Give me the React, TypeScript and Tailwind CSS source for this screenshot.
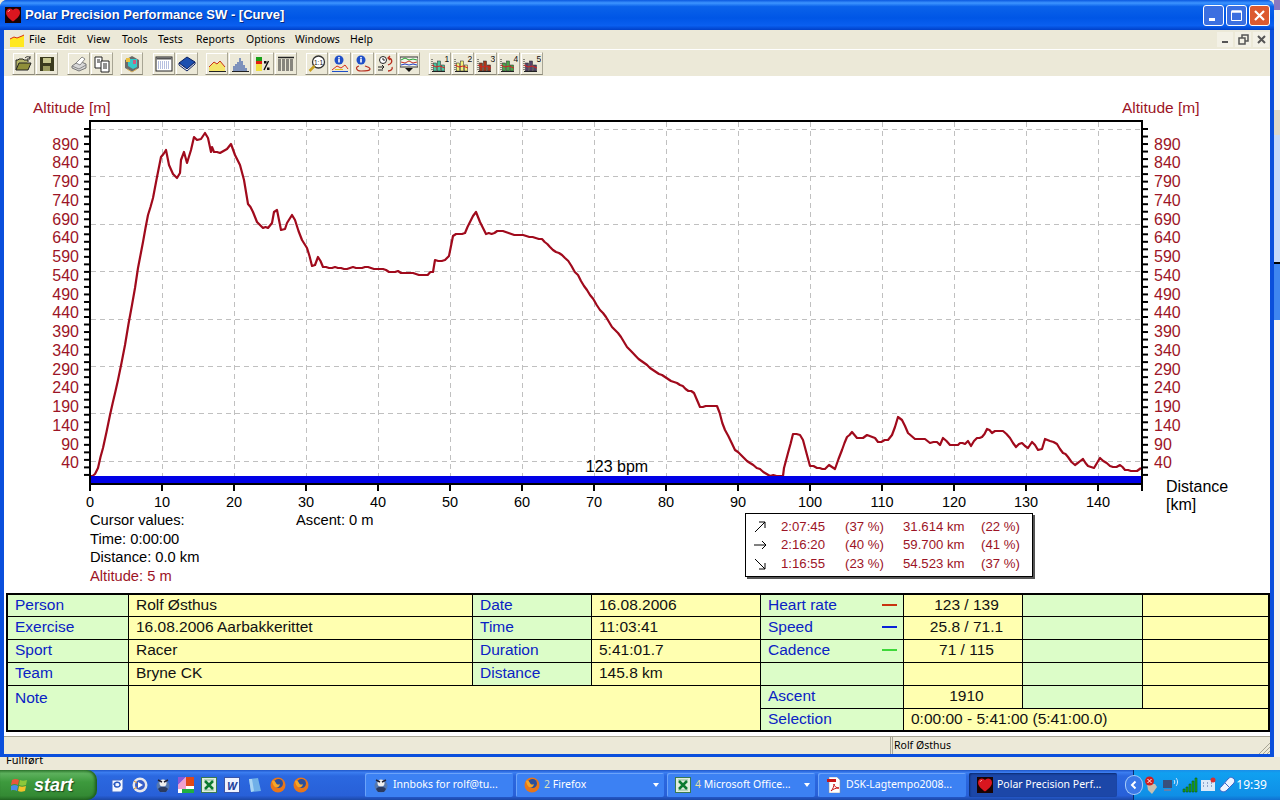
import type { ReactNode } from "react";

const CURVE_POINTS =
  "90,476 95,474 98,468 103,448 110,415 118,380 125,345 132,305 135,288 138,268 143,242 148,215 153,198 157,177 161,157 166,150 169,165 173,174 177,178 180,173 181,160 184,152 187,163 191,150 194,137 197,140 201,139 205,133 208,138 211,152 212,147 214,152 220,153 227,149 231,144 235,155 240,165 244,180 248,204 253,212 257,222 263,228 268,228 272,223 274,212 277,210 281,230 285,229 287,223 292,215 295,220 302,240 307,248 312,266 315,265 318,257 323,267 338,268 350,268 365,267 380,269 395,272 410,273 425,275 433,272 435,260 445,260 449,256 453,236 465,233 470,222 476,212 480,222 486,234 500,231 520,235 542,239 550,247 565,258 578,275 590,295 600,310 615,330 630,350 650,368 665,377 680,385 694,393 700,407 717,406 725,430 735,450 750,463 760,469 770,476 783,476 784,468 788,453 793,434 800,435 803,440 807,455 810,466 817,468 825,469 829,465 835,469 842,450 847,437 852,432 857,438 863,438 867,435 875,438 878,442 888,440 892,435 898,417 902,420 908,433 915,439 925,439 930,443 937,442 940,445 943,438 950,445 958,445 960,443 965,444 968,441 971,446 977,438 982,437 987,429 992,433 995,431 1003,431 1010,438 1016,447 1022,443 1028,448 1032,442 1038,450 1042,449 1045,439 1050,441 1057,444 1063,453 1068,457 1075,465 1083,459 1088,466 1094,468 1100,458 1110,466 1113,467 1120,465 1125,470 1137,471 1141,468";

function roughen(points: string) {
  const pts = points.split(" ").map((p) => p.split(",").map(Number));
  const out: string[] = [];
  pts.forEach(([x, y], i) => {
    const next = pts[i + 1];
    if (!next) {
      out.push(`${x},${y}`);
      return;
    }
    const steps = Math.max(1, Math.round((next[0] - x) / 3));
    for (let s = 0; s < steps; s++) {
      const px = x + ((next[0] - x) * s) / steps;
      const py = y + ((next[1] - y) * s) / steps;
      const noise = s === 0 ? 0 : Math.sin(px * 12.9898) * 0.9;
      out.push(`${px.toFixed(1)},${Math.min(476, Math.round(py + noise))}`);
    }
  });
  return out.join(" ");
}

const CURVE = roughen(CURVE_POINTS);

const ALT_LABELS = [890, 840, 790, 740, 690, 640, 590, 540, 490, 440, 390, 340, 290, 240, 190, 140, 90, 40];
const H_GRID = [129.5, 176.5, 224.5, 271.5, 319.5, 366.5, 413.5, 461.5];
const KM_LABELS = [0, 10, 20, 30, 40, 50, 60, 70, 80, 90, 100, 110, 120, 130, 140];
const TICKS = Array.from({ length: 47 }, (_, i) => 129 + i * 7.52);

function AltitudeChart() {
  const red = "#9c1426";
  return (
    <svg width="1266" height="435" viewBox="4 76 1266 435" className="block shrink-0 overflow-visible">
      <text x="33" y="113" fontSize="15.500" fill={red}>Altitude [m]</text>
      <text x="1122" y="113" fontSize="15.500" fill={red}>Altitude [m]</text>
      {H_GRID.map((y) => (
        <line key={y} x1="91" x2="1141" y1={y} y2={y} stroke="#c0c0c0" strokeDasharray="5 4" />
      ))}
      {KM_LABELS.slice(1).map((k) => (
        <line key={k} x1={Math.round(90 + k * 7.2) + 0.5} x2={Math.round(90 + k * 7.2) + 0.5} y1="122" y2="476" stroke="#c0c0c0" strokeDasharray="5 4" />
      ))}
      {TICKS.map((y) => (
        <g key={y} stroke="#000" strokeWidth="2">
          <line x1="84" x2="90" y1={y} y2={y} />
          <line x1="1142" x2="1148" y1={y} y2={y} />
        </g>
      ))}
      {ALT_LABELS.map((a, i) => (
        <g key={a} fontSize="16" fill={red}>
          <text x="79" y={149.500 + i * 18.76} textAnchor="end">{a}</text>
          <text x="1154" y={149.500 + i * 18.76}>{a}</text>
        </g>
      ))}
      <polyline points={CURVE} fill="none" stroke="#a00a1c" strokeWidth="2.200" strokeLinejoin="round" />
      <rect x="90" y="476" width="1052" height="7" fill="#0000e6" />
      <rect x="89" y="120" width="1054" height="2" fill="#000" />
      <rect x="89" y="483" width="1054" height="2" fill="#000" />
      <rect x="89" y="120" width="2" height="371" fill="#000" />
      <rect x="1141" y="120" width="2" height="371" fill="#000" />
      {KM_LABELS.slice(1).map((k) => (
        <rect key={k} x={89 + k * 7.2} y="484" width="2" height="7" fill="#000" />
      ))}
      {KM_LABELS.map((k) => (
        <text key={k} x={90 + k * 7.2} y="507" fontSize="14.500" fill="#000" textAnchor="middle">{k}</text>
      ))}
      <text x="617" y="472" fontSize="16" fill="#000" textAnchor="middle">123 bpm</text>
      <text x="1166" y="492" fontSize="16" fill="#000">Distance</text>
      <text x="1166" y="510" fontSize="16" fill="#000">[km]</text>
    </svg>
  );
}

function Arrow({ d }: { d: string }) {
  return (
    <svg width="14" height="14" viewBox="0 0 14 14" fill="none" stroke="#000" strokeWidth="1">
      <path d={d} />
    </svg>
  );
}

const STATS = [
  { arrow: "M2 12 12 2M6 2h6v6", time: "2:07:45", p1: "(37 %)", dist: "31.614 km", p2: "(22 %)" },
  { arrow: "M1 7h12M9 3l4 4-4 4", time: "2:16:20", p1: "(40 %)", dist: "59.700 km", p2: "(41 %)" },
  { arrow: "M2 2l10 10M12 6v6H6", time: "1:16:55", p1: "(23 %)", dist: "54.523 km", p2: "(37 %)" },
];

function StatsBox() {
  return (
    <div className="mt-[2px] flex h-[64px] w-[288px] flex-col justify-center border border-black bg-white pl-[7px] text-[13.200px] text-[#9c1426] shadow-[2px_2px_0_#555]">
      {STATS.map((s) => (
        <div key={s.time} className="flex h-[18.500px] items-center">
          <div className="w-[28px]"><Arrow d={s.arrow} /></div>
          <div className="w-[64px]">{s.time}</div>
          <div className="w-[58px]">{s.p1}</div>
          <div className="w-[78px]">{s.dist}</div>
          <div>{s.p2}</div>
        </div>
      ))}
    </div>
  );
}

const GREEN = "bg-[#dcfdc8] text-[#0a22c4]";
const YELLOW = "bg-[#ffffb0] text-[#111]";

function Cell({ tone, className = "", children }: { tone: "g" | "y"; className?: string; children?: ReactNode }) {
  return (
    <div className={`flex items-center border-r border-b border-black pb-[2px] pl-[7px] ${tone === "g" ? GREEN : YELLOW} ${className}`}>
      {children}
    </div>
  );
}

function Sensor({ name, color }: { name: string; color: string }) {
  return (
    <Cell tone="g" className="justify-between pr-[6px]">
      <span>{name}</span>
      <span className={`h-[2px] w-[15px] ${color}`} />
    </Cell>
  );
}

function SummaryTable() {
  const c = "justify-center pl-0";
  return (
    <div className="mx-[2px] grid w-[1264px] shrink-0 grid-cols-[121px_344px_119px_169px_143px_119px_120px_1fr] grid-rows-[22px_23px_23px_23px_23px_22px] border-t-2 border-r border-b border-l-2 border-black text-[15.500px]">
      <Cell tone="g">Person</Cell><Cell tone="y">Rolf Østhus</Cell><Cell tone="g">Date</Cell><Cell tone="y">16.08.2006</Cell>
      <Sensor name="Heart rate" color="bg-[#c8340f]" /><Cell tone="y" className={c}>123 / 139</Cell><Cell tone="g" /><Cell tone="y" />

      <Cell tone="g">Exercise</Cell><Cell tone="y">16.08.2006 Aarbakkerittet</Cell><Cell tone="g">Time</Cell><Cell tone="y">11:03:41</Cell>
      <Sensor name="Speed" color="bg-[#0a22d8]" /><Cell tone="y" className={c}>25.8 / 71.1</Cell><Cell tone="g" /><Cell tone="y" />

      <Cell tone="g">Sport</Cell><Cell tone="y">Racer</Cell><Cell tone="g">Duration</Cell><Cell tone="y">5:41:01.7</Cell>
      <Sensor name="Cadence" color="bg-[#3ed83a]" /><Cell tone="y" className={c}>71 / 115</Cell><Cell tone="g" /><Cell tone="y" />

      <Cell tone="g">Team</Cell><Cell tone="y">Bryne CK</Cell><Cell tone="g">Distance</Cell><Cell tone="y">145.8 km</Cell>
      <Cell tone="g" /><Cell tone="y" /><Cell tone="g" /><Cell tone="y" />

      <Cell tone="g" className="row-span-2 items-start">Note</Cell>
      <Cell tone="y" className="col-span-3 row-span-2" />
      <Cell tone="g">Ascent</Cell><Cell tone="y" className={c}>1910</Cell><Cell tone="g" /><Cell tone="y" />
      <Cell tone="g">Selection</Cell><Cell tone="y" className="col-span-3">0:00:00 - 5:41:00 (5:41:00.0)</Cell>
    </div>
  );
}

function Heart({ size = 16 }: { size?: number }) {
  return (
    <svg width={size} height={size} viewBox="0 0 16 16">
      <rect width="16" height="16" fill="#180404" />
      <path d="M8 14.500C4 11.500 1 9 1 5.500 1 3 3 1.500 5 1.500c1.300 0 2.400.7 3 1.800.6-1.100 1.700-1.800 3-1.800 2 0 4 1.500 4 4 0 3.500-3 6-7 9Z" fill="#d9161f" />
      <path d="M3 5c.3-1 1-1.600 2-1.700" stroke="#ff9a9a" fill="none" />
    </svg>
  );
}

const ICONS: ReactNode[] = [
  <><path d="M1 15V5h2l1-1h4l1 1h4v2" fill="#b5b56a" stroke="#222" /><path d="M1 15l3-7h12l-3 7Z" fill="#8f8f3a" stroke="#222" /><path d="M10 3c2-2 4-1.500 5 0M15 1v3h-3" fill="none" stroke="#222" /></>,
  <><rect x="2" y="2" width="14" height="14" fill="#3a3a1e" /><rect x="5" y="3" width="8" height="5" fill="#c8c890" /><rect x="5" y="11" width="7" height="5" fill="#9a9a5e" /></>,
  <><path d="M2 11l7-5 7 3v4l-7 3-7-3Z" fill="#d8d8d8" stroke="#777" /><path d="M6 8l6-6 3 2-5 6Z" fill="#fff" stroke="#888" /><path d="M2 11l7 3 7-4" fill="none" stroke="#888" /></>,
  <><path d="M2 2h7v11H2Z" fill="#fff" stroke="#222" /><path d="M8 6h8v11H8Z" fill="#fff" stroke="#222" /><path d="M4 5h3M4 7h3M10 9h4M10 11h4M10 13h4" stroke="#222" /></>,
  <><path d="M9 1l7 4v8l-7 4-7-4V5Z" fill="#6a6a6a" /><path d="M5 4h9v8l-4 2-5-3Z" fill="#38c8c8" /><rect x="3" y="3" width="4" height="4" fill="#e8c040" /><rect x="10" y="5" width="3" height="4" fill="#d05a80" /><path d="M4 14l5 3 5-3" stroke="#d8b060" fill="none" /></>,
  <><rect x="1" y="2" width="16" height="14" fill="#fff" stroke="#222" /><rect x="1.500" y="2.500" width="15" height="2" fill="#555" /><path d="M3 7h12M3 9h12M3 11h12M3 13h12" stroke="#6a7fc0" strokeDasharray="1 1" /></>,
  <><path d="M1 8l8-6 8 5-8 7Z" fill="#1c4fb0" stroke="#0a1f60" /><path d="M1 8v2l8 6 8-7V7l-8 7Z" fill="#fff" stroke="#0a1f60" /></>,
  <><rect x="1" y="16" width="17" height="1" fill="#222" /><path d="M1 12l5-5 3 2 3-3 5 6v4H1Z" fill="#f4e56a" /><path d="M1 12l5-5 3 2 3-3 5 6" fill="none" stroke="#c83218" /></>,
  <><path d="M3 16V11M5 16V9M7 16V7M9 16V3M11 16V6M13 16V10M15 16V13" stroke="#3558a8" strokeWidth="1.200" /><path d="M1 16.500h17" stroke="#222" /></>,
  <><rect x="2" y="2" width="6" height="4" fill="#18a018" /><rect x="2" y="6" width="6" height="3" fill="#e02010" /><rect x="2" y="9" width="6" height="7" fill="#f0e040" /><path d="M14.500 6 10 15" stroke="#111" strokeWidth="1.400" /><rect x="10" y="6" width="2.500" height="2.500" fill="#111" /><rect x="13" y="12.500" width="2.500" height="2.500" fill="#111" /></>,
  <><path d="M1 2.500h16" stroke="#222" strokeWidth="1.500" /><path d="M1 5h16M1 7h16M1 9h16M1 11h16M1 13h16M1 15h16" stroke="#222" strokeDasharray="3 1" /></>,
  <><circle cx="10.500" cy="7" r="6" fill="#fff" stroke="#333" strokeWidth="1.300" /><path d="M6.500 11l-5 5" stroke="#c8a020" strokeWidth="2.500" /><text x="10.500" y="9.500" fontSize="6.500" textAnchor="middle" fill="#111">1:1</text></>,
  <><circle cx="8" cy="5" r="4.500" fill="#1f4fc8" /><rect x="7.200" y="2" width="1.600" height="1.500" fill="#fff" /><rect x="7.200" y="4" width="1.600" height="3.500" fill="#fff" /><path d="M1 15l5-4 4 2 4-3 3 4" stroke="#d83018" fill="none" /><path d="M1 16.500h16" stroke="#1f4fc8" /><path d="M4 14.500h8" stroke="#e0c020" /></>,
  <><circle cx="7" cy="5" r="4.500" fill="#1f4fc8" /><rect x="6.200" y="2" width="1.600" height="1.500" fill="#fff" /><rect x="6.200" y="4" width="1.600" height="3.500" fill="#fff" /><path d="M5 11c-4 1-3 5 2 5s9 0 9-2-3-2-5-3" stroke="#b83020" fill="none" strokeWidth="1.200" /></>,
  <><circle cx="6" cy="5" r="3.500" fill="#fff" stroke="#222" /><path d="M6 3v2h2" stroke="#222" fill="none" /><path d="M1 12h6M5 10l2 2-2 2M1 15h5" stroke="#222" fill="none" /><path d="M11 3c4 0 5 4 2 6l-2 1M11 16c3 0 5-2 4-4M13 1l-2 2 2 2" stroke="#b83020" fill="none" strokeWidth="1.300" /></>,
  <><rect x="0" y="2" width="18" height="10" fill="#f4f4ec" stroke="#333" /><path d="M1 5l4-2 4 2 4-1 4 1" stroke="#20a030" fill="none" /><path d="M1 7l4 1 4-2 4 2 4-1" stroke="#c83020" fill="none" /><path d="M1 10l4-1 4 1 4-1 4 1" stroke="#2040c8" fill="none" /><path d="M9 17l-4-4h8Z" fill="#111" /></>,
];

function ChartNumberIcon({ n, color }: { n: number; color: string }) {
  return (
    <>
      <path d="M1 4v12" stroke="#222" strokeDasharray="1 1" />
      <rect x="2.500" y="8" width="3" height="8" fill={color} stroke="#222" strokeWidth=".5" />
      <rect x="6.500" y="6" width="3" height="10" fill={color} stroke="#222" strokeWidth=".5" />
      <rect x="10.500" y="10" width="3" height="6" fill={color} stroke="#222" strokeWidth=".5" />
      <path d="M1 16.500h13" stroke="#222" />
      <path d="M1 10l4 2 4-1 5 2" stroke="#d82020" fill="none" />
      <text x="13.500" y="7" fontSize="8.500" fill="#111">{n}</text>
    </>
  );
}

function ToolButton({ children }: { children: ReactNode }) {
  return (
    <div className="flex h-[23px] w-[23px] items-center justify-center border border-[#ece9d8] border-r-[#a8a594] border-b-[#8a8778] bg-[#ece9d8] shadow-[inset_1px_1px_0_#fff]">
      <svg width="18" height="18" viewBox="0 0 18 18">{children}</svg>
    </div>
  );
}

function Group({ className, from, to }: { className: string; from: number; to: number }) {
  return (
    <div className={`flex ${className}`}>
      {ICONS.slice(from, to).map((icon, i) => (
        <ToolButton key={i}>{icon}</ToolButton>
      ))}
    </div>
  );
}

function Toolbar() {
  const charts = ["#48c8a0", "#f0f078", "#a83818", "#48a848", "#544468"];
  return (
    <div className="flex h-[26px] shrink-0 items-center bg-[#ece9d8] pl-[8px] pt-[1px]">
      <Group className="" from={0} to={2} />
      <Group className="ml-[9px]" from={2} to={4} />
      <Group className="ml-[7px]" from={4} to={5} />
      <Group className="ml-[9px]" from={5} to={7} />
      <Group className="ml-[7px]" from={7} to={11} />
      <Group className="ml-[8px]" from={11} to={16} />
      <div className="ml-[8px] flex">
        {charts.map((color, i) => (
          <ToolButton key={color}><ChartNumberIcon n={i + 1} color={color} /></ToolButton>
        ))}
      </div>
    </div>
  );
}

const MENU = [
  { label: "File", w: "w-[28px]" },
  { label: "Edit", w: "w-[30px]" },
  { label: "View", w: "w-[35px]" },
  { label: "Tools", w: "w-[36px]" },
  { label: "Tests", w: "w-[38px]" },
  { label: "Reports", w: "w-[50px]" },
  { label: "Options", w: "w-[49px]" },
  { label: "Windows", w: "w-[55px]" },
  { label: "Help", w: "w-[30px]" },
];

function MdiButton({ children }: { children: ReactNode }) {
  return (
    <div className="flex h-[15px] w-[16px] items-center justify-center bg-[#f3f1e6]">
      <svg width="11" height="11" viewBox="0 0 11 11" stroke="#555" fill="none" strokeWidth="1.500">{children}</svg>
    </div>
  );
}

function MenuBar() {
  return (
    <div className="flex h-[20px] shrink-0 items-center border-b border-white bg-[#ece9d8] pl-[5px] pr-[1px] font-['Noto_Sans',sans-serif] text-[10.500px] text-black">
      <svg width="16" height="14" viewBox="0 0 16 14" className="mt-[3px]">
        <path d="M1 13V5l4-2 3 1 5-2 2-1v12Z" fill="#ffe820" />
        <path d="M1 5l4-2 3 1 5-2 2-1" stroke="#d83010" fill="none" />
      </svg>
      <div className="ml-[4px] flex">
        {MENU.map((m) => (
          <span key={m.label} className={m.w}>{m.label}</span>
        ))}
      </div>
      <div className="ml-auto flex gap-[2px]">
        <MdiButton><path d="M2 8h6" strokeWidth="2" /></MdiButton>
        <MdiButton><path d="M1 4h6v6H1ZM4 4V1h6v6H7" /></MdiButton>
        <MdiButton><path d="M2 2l7 7M9 2l-7 7" strokeWidth="2" /></MdiButton>
      </div>
    </div>
  );
}

function CaptionButton({ tone, children }: { tone: string; children: ReactNode }) {
  return (
    <div className={`flex h-[21px] w-[21px] items-center justify-center rounded-[3px] border border-white ${tone}`}>
      <svg width="15" height="15" viewBox="0 0 15 15" fill="none" stroke="#fff">{children}</svg>
    </div>
  );
}

function TitleBar() {
  return (
    <div className="flex h-[30px] shrink-0 items-center rounded-t-[7px] bg-[linear-gradient(180deg,#0a58e0_0%,#3d95ff_10%,#0a62ea_22%,#0056e6_60%,#0a5ff0_85%,#0040c8_100%)] pl-[5px] pr-[4px]">
      <Heart />
      <span className="ml-[4px] text-[13px] font-bold text-white [text-shadow:1px_1px_0_#0a2a80]">
        Polar Precision Performance SW - [Curve]
      </span>
      <div className="ml-auto flex gap-[2px]">
        <CaptionButton tone="bg-[#3b6fe0]"><path d="M3 11.500h6" strokeWidth="3" /></CaptionButton>
        <CaptionButton tone="bg-[#3b6fe0]"><path d="M2.500 3.500h10v9h-10Z" strokeWidth="1" /><path d="M2.500 3.500h10" strokeWidth="2.500" /></CaptionButton>
        <CaptionButton tone="bg-[#dc5a30]"><path d="M3 3l9 9M12 3l-9 9" strokeWidth="2.200" /></CaptionButton>
      </div>
    </div>
  );
}

function StatusBar() {
  return (
    <div className="flex h-[18px] shrink-0 border-t border-[#a8a594] bg-[#ece9d8] font-['Noto_Sans',sans-serif] text-[10.500px] text-black">
      <div className="w-[887px] border-r border-[#a8a594]" />
      <div className="ml-[1px] flex-1 border-l border-[#a8a594] pl-[1px] leading-[17px]">Rolf Østhus</div>
      <svg width="12" height="12" viewBox="0 0 12 12" className="mt-[5px]" stroke="#a8a594">
        <path d="M1 12 12 1M5 12l7-7M9 12l3-3" />
      </svg>
    </div>
  );
}

function Firefox() {
  return (
    <svg width="16" height="16" viewBox="0 0 16 16">
      <circle cx="8" cy="8" r="7.500" fill="#e8761a" />
      <circle cx="8.500" cy="6.500" r="4.500" fill="#2a4f9c" />
      <path d="M2 4c2-1 3 0 4 2 .8 1.800 3 2 4 1-.5 2.500-2 4-4 3.500C4 10 2.500 7 2 4Z" fill="#f4a628" />
    </svg>
  );
}

function MailBird() {
  return (
    <svg width="16" height="16" viewBox="0 0 16 16">
      <circle cx="8" cy="9" r="6.500" fill="#5578b0" />
      <circle cx="8" cy="6" r="3.500" fill="#eee" />
      <path d="M3 12c2-3 8-3 10 0l-2 3H5Z" fill="#2a3a60" />
      <path d="M3 3l4 2M13 3 9 5" stroke="#223" strokeWidth="1.500" />
    </svg>
  );
}

function Excel() {
  return (
    <svg width="16" height="16" viewBox="0 0 16 16">
      <rect x=".5" y=".5" width="15" height="15" fill="#dfeedd" stroke="#3a7a50" />
      <path d="M3 3h10M3 13h10" stroke="#88b898" />
      <path d="M4 4l8 8M12 4l-8 8" stroke="#0c7a30" strokeWidth="2.500" />
    </svg>
  );
}

const QUICK: ReactNode[] = [
  <svg width="16" height="16" viewBox="0 0 16 16"><path d="M3 3h9l2-2v11l-2 3H3Z" fill="#f4f7ff" stroke="#3a66c8" /><path d="M5 8c0-3 5-4 6-1 .5 2-1 3-3 3S5 9 6 7" stroke="#2858c0" fill="none" strokeWidth="1.500" /></svg>,
  <svg width="16" height="16" viewBox="0 0 16 16"><circle cx="8" cy="8" r="7.500" fill="#e8e8ec" /><circle cx="8" cy="8" r="5" fill="#3a5fc8" /><path d="M6 5l5 3-5 3Z" fill="#fff" /><path d="M2 4l3 2M2 12l3-2" stroke="#e09020" /></svg>,
  <MailBird />,
  <svg width="16" height="16" viewBox="0 0 16 16"><rect width="16" height="16" fill="#fff" /><path d="M0 0h8L0 8Z" fill="#8858d8" /><rect x="8" y="0" width="8" height="9" fill="#e04818" /><path d="M0 8l8-8v12H0Z" fill="#e878b8" opacity=".7" /><rect x="4" y="12" width="12" height="4" fill="#20b040" /></svg>,
  <Excel />,
  <svg width="16" height="16" viewBox="0 0 16 16"><rect x=".5" y=".5" width="15" height="15" fill="#eef2ff" stroke="#3a55a8" /><text x="8" y="12.500" fontSize="11" fontWeight="700" fontStyle="italic" fill="#24429c" textAnchor="middle">W</text></svg>,
  <svg width="16" height="16" viewBox="0 0 16 16"><path d="M2 2l9-1 3 13-10 1Z" fill="#70b0e8" /><path d="M2 2l2 13 3-1-2-12Z" fill="#a8d4f4" /></svg>,
  <Firefox />,
  <Firefox />,
];

function TaskButton({ icon, label, active, caret }: { icon: ReactNode; label: ReactNode; active?: boolean; caret?: boolean }) {
  return (
    <div
      className={`flex h-[24px] w-[148px] shrink-0 items-center rounded-[2px] pl-[8px] pr-[5px] ${
        active ? "bg-[#1c47a8] shadow-[inset_1px_1px_2px_#0a2a70]" : "bg-[#3c81f3] shadow-[inset_1px_1px_0_#6ba3fa]"
      }`}
    >
      {icon}
      <span className="ml-[4px] flex-1 truncate">{label}</span>
      {caret && <span className="h-0 w-0 border-x-[3px] border-t-[4px] border-x-transparent border-t-white" />}
    </div>
  );
}

function Tray() {
  return (
    <div className="ml-auto flex h-full w-[147px] items-center border-l border-[#0a2a70] bg-[linear-gradient(180deg,#1a8fe8_0%,#10a0f0_10%,#0f8fe6_85%,#1070d0_100%)] pr-[13px]">
      <div className="-ml-[8px] flex h-[18px] w-[18px] items-center justify-center rounded-full bg-[#3a78e8] shadow-[0_0_0_1px_#a8ccf8]">
        <svg width="10" height="10" viewBox="0 0 10 10" fill="none" stroke="#fff" strokeWidth="2"><path d="M6.500 1.500 3 5l3.500 3.500" /></svg>
      </div>
      <div className="ml-[2px] flex items-center gap-[2px]">
        <svg width="16" height="18" viewBox="0 0 16 18"><path d="M3 8h8l2 3-5 7-4-4Z" fill="#c8c0b0" /><circle cx="5.500" cy="5" r="4.500" fill="#d02020" /><path d="M3.500 3l4 4M7.500 3l-4 4" stroke="#fff" /></svg>
        <svg width="18" height="16" viewBox="0 0 18 16"><rect x="1" y="3" width="9" height="8" fill="#39507c" /><rect x="2" y="12" width="7" height="2" fill="#6a7fa8" /><path d="M12 3c1 1 1 3 0 4M14 1c2 2 2 6 0 8" stroke="#d8e8ff" fill="none" /></svg>
        <svg width="16" height="16" viewBox="0 0 16 16"><path d="M1 12h2v3H1ZM4 10h2v5H4ZM7 7h2v8H7ZM10 4h2v11h-2ZM13 1h2v14h-2Z" fill="#1fa81f" stroke="#064a06" strokeWidth=".5" /></svg>
        <svg width="16" height="16" viewBox="0 0 16 16"><rect x="1" y="3" width="14" height="11" fill="#dceaf8" /><path d="M3 6h1M7 6h1M11 6h1M3 9h1M7 9h1M11 9h1" stroke="#4060a0" /><circle cx="13" cy="3" r="2.500" fill="#d83030" /></svg>
        <svg width="18" height="18" viewBox="0 0 18 18"><path d="M3 15c-2-2-1-3 0-4l7-8c2-2 3-2 5-1s2 3 1 5l-8 8c-2 1-3 1-5 0Z" fill="#eef4ff" stroke="#3a66c8" /><path d="M7 7l4 4" stroke="#3a66c8" /></svg>
      </div>
      <span className="ml-auto text-[12px] text-white">19:39</span>
    </div>
  );
}

function Taskbar() {
  return (
    <div className="flex h-[30px] shrink-0 items-center bg-[linear-gradient(180deg,#1f56c8_0%,#3b7df0_8%,#2b68e0_20%,#2860d8_85%,#1c48a8_100%)] font-['Noto_Sans',sans-serif] text-[10.500px] text-white">
      <div className="flex h-full w-[97px] shrink-0 items-center rounded-r-[10px] bg-[linear-gradient(180deg,#3c8a3c_0%,#5cb05c_12%,#3d9a3d_40%,#348a34_85%,#266e26_100%)] pl-[11px] shadow-[inset_-2px_0_3px_#1c5a1c]">
        <svg width="18" height="18" viewBox="0 0 18 18">
          <path d="M1 4c3-1.500 5-1 7 0l-1 5c-2-1-4-1.500-7 0Z" fill="#e8563a" />
          <path d="M9 4c2 1 4 1 7 0l-1 5c-3 1-5 1-7 0Z" fill="#8cc83a" />
          <path d="M0 10c3-1.500 5-1 7 0l-1 5c-2-1-4-1.500-7 0Z" fill="#4a8ae8" />
          <path d="M8 10c2 1 4 1 7 0l-1 5c-3 1-5 1-7 0Z" fill="#f4c22a" />
        </svg>
        <span className="ml-[5px] font-['Liberation_Sans',sans-serif] text-[18px] font-bold italic text-white [text-shadow:1px_1px_1px_#1c4a1c]">start</span>
      </div>
      <div className="ml-[12px] flex w-[255px] shrink-0 gap-[7px]">
        {QUICK.map((icon, i) => (
          <div key={i} className="flex w-[16px] justify-center">{icon}</div>
        ))}
      </div>
      <div className="ml-[1px] flex gap-[3px]">
        <TaskButton icon={<MailBird />} label="Innboks for rolf@tu..." />
        <TaskButton icon={<Firefox />} label={<><span className="text-[#d8e0c0]">2</span> Firefox</>} caret />
        <TaskButton icon={<Excel />} label={<><span className="text-[#e8e0a0]">4</span> Microsoft Office...</>} caret />
        <TaskButton
          icon={
            <svg width="16" height="16" viewBox="0 0 16 16">
              <path d="M3 0h8l3 3v13H3Z" fill="#fff" stroke="#888" strokeWidth=".5" />
              <rect x="1" y="2" width="9" height="3" fill="#c81818" />
              <path d="M5 14c2-2 3-5 3-7 0 2 2 4 5 4-3 0-6 1-8 3Z" fill="none" stroke="#c81818" />
            </svg>
          }
          label="DSK-Lagtempo2008..."
        />
        <TaskButton icon={<Heart />} label="Polar Precision Perf..." active />
      </div>
      <Tray />
    </div>
  );
}

export default function App() {
  return (
    <div className="flex h-[800px] w-[1280px] flex-col overflow-hidden bg-[#ece9d8] font-['Liberation_Sans',sans-serif]">
      <div className="flex h-[757px] shrink-0">
        <div className="flex w-[1274px] flex-col rounded-t-[7px] bg-[#0a4fdc]">
          <TitleBar />
          <div className="flex flex-1 flex-col overflow-hidden border-x-[4px] border-b-[3px] border-x-[#0a4fdc] border-b-[#0a4fdc] bg-white">
            <MenuBar />
            <Toolbar />
            <AltitudeChart />
            <div className="flex h-[82px] shrink-0 pl-[86px] text-[14.700px] text-black">
              <div className="w-[206px] leading-[18.500px]">
                <div>Cursor values:</div>
                <div>Time: 0:00:00</div>
                <div>Distance: 0.0 km</div>
                <div className="text-[#9c1426]">Altitude: 5 m</div>
              </div>
              <div className="w-[449px] leading-[18.500px]">Ascent: 0 m</div>
              <StatsBox />
            </div>
            <SummaryTable />
            <div className="h-[4px] shrink-0" />
            <StatusBar />
          </div>
        </div>
        <div className="flex w-[6px] flex-col bg-[#f4f4f0]">
          <div className="h-[10px] bg-[#8a78c0]" />
          <div className="h-[100px] bg-[#f4f4f0]" />
          <div className="h-[25px] bg-[#ddd8c8]" />
          <div className="h-[127px] bg-[#c4d8f8]" />
          <div className="h-[2px] bg-black" />
          <div className="h-[56px] bg-[#3f86f0]" />
        </div>
      </div>
      <div className="h-[13px] shrink-0 overflow-hidden bg-[#ece9d8] pl-[6px] font-['Noto_Sans',sans-serif] text-[11px] leading-[6px] text-black">Fullført</div>
      <Taskbar />
    </div>
  );
}
